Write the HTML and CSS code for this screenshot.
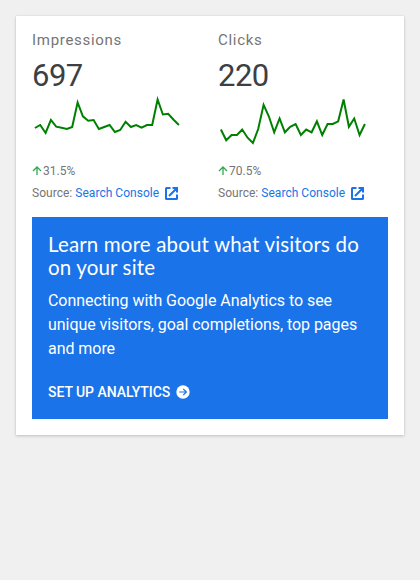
FILE: index.html
```html
<!DOCTYPE html>
<html lang="en">
<head>
<meta charset="utf-8">
<title>Search overview</title>
<link rel="stylesheet" href="styles.css">
</head>
<body>
<main class="card">
  <div class="metrics">
    <section class="metric">
      <h3 class="label">Impressions</h3>
      <div class="value">697</div>
      <svg class="chart" viewBox="32.4 96 154 56"><polyline points="35.3,128 40.6,125 46,133 51.3,120 56.6,126.7 62,127.8 67.3,129 72.6,127 78,102.5 83.3,116.3 88.6,120.7 94,120 99.3,129 104.6,127 110,125 115.3,132 120.6,130 126,121.8 131.3,127 136.6,125 142,127.7 147.3,125 152.6,125 158,99.5 163.3,114.5 168.6,113.8 174,119.7 179.3,125"/></svg>
      <div class="change"><svg class="up" viewBox="0 0 10 10"><path d="M5 9V1.5M1 5l4-4 4 4"/></svg>31.5%</div>
      <div class="source">Source: <a class="link">Search Console</a><svg class="external" viewBox="0 0 13 13"><path d="M5.500 1H1.500Q1 1 1 1.500v10Q1 12 1.500 12h10Q12 12 12 11.500V7.500M7.500 1H12v4.500M12 1L4 9"/></svg></div>
    </section>
    <section class="metric">
      <h3 class="label">Clicks</h3>
      <div class="value">220</div>
      <svg class="chart" viewBox="218.4 96 154 56"><polyline points="221.3,129.500 226.600,140.300 232,135 237.300,135 242.600,129.500 248,137.700 253.300,143 258.600,129 264,104.800 269.300,116.500 274.600,132.300 280,118.500 285.300,132.300 290.600,126.800 296,124 301.300,135 306.600,129.500 312,132.300 317.300,121.300 322.600,135 328,124 333.300,124 338.600,121.300 344,99.500 349.300,126.800 354.600,118.500 360,135 365.300,124"/></svg>
      <div class="change"><svg class="up" viewBox="0 0 10 10"><path d="M5 9V1.5M1 5l4-4 4 4"/></svg>70.5%</div>
      <div class="source">Source: <a class="link">Search Console</a><svg class="external" viewBox="0 0 13 13"><path d="M5.500 1H1.500Q1 1 1 1.500v10Q1 12 1.500 12h10Q12 12 12 11.500V7.500M7.500 1H12v4.500M12 1L4 9"/></svg></div>
    </section>
  </div>
  <section class="promo">
    <h2 class="promo-title">Learn more about what visitors do<br>on your site</h2>
    <p class="promo-text">Connecting with Google Analytics to see unique visitors, goal completions, top pages and more</p>
    <a class="cta">Set up Analytics<svg class="arrow" viewBox="0 0 14 14"><circle cx="7" cy="7" r="6.700"/><path d="M3.200 7h7M7.200 3.800L10.400 7l-3.200 3.200"/></svg></a>
  </section>
</main>
</body>
</html>
```
FILE: styles.css
```css
* { box-sizing: border-box; }
body {
  margin: 0;
  padding: 16px;
  background: #f0f0f0;
  color: #757575;
  font-family: Roboto, sans-serif;
}
.card {
  height: 419px;
  padding: 16px;
  background: #fff;
  box-shadow: 0 1px 3px rgba(0, 0, 0, .2), 0 0 1px rgba(0, 0, 0, .1);
}
.metrics {
  display: grid;
  grid-template-columns: 170px 170px;
  column-gap: 16px;
  height: 185px;
}
.label {
  margin: 0;
  font-size: 15px;
  font-weight: 400;
  line-height: 16px;
  letter-spacing: .7px;
}
.value {
  margin-top: 8px;
  height: 40px;
  color: #3c4043;
  font-size: 31px;
  line-height: 40px;
  letter-spacing: -.5px;
}
.chart {
  display: block;
  width: 154px;
  height: 56px;
  fill: none;
  stroke: #008000;
  stroke-width: 2;
}
.change {
  display: flex;
  align-items: center;
  margin-top: 11px;
  font-size: 12px;
  line-height: 16px;
  letter-spacing: .03px;
}
.up {
  width: 10px;
  height: 10px;
  margin-right: 1.5px;
  margin-left: -.5px;
  fill: none;
  stroke: #34a853;
  stroke-width: 1.3;
}
.source {
  display: flex;
  align-items: center;
  margin-top: 6px;
  font-size: 12px;
  line-height: 16px;
  letter-spacing: .03px;
  white-space: pre;
}
.link { color: #1a73e8; }
.external {
  width: 13px;
  height: 13px;
  margin-left: 5.500px;
  fill: none;
  stroke: #1a73e8;
  stroke-width: 2;
}
.promo {
  height: 202px;
  padding: 16px;
  background: #1a73e8;
  color: #fff;
}
.promo-title {
  margin: 0;
  font-family: Lato, sans-serif;
  font-size: 20.5px;
  font-weight: 400;
  line-height: 23px;
  letter-spacing: .15px;
}
.promo-text {
  margin: 10px 0 19px;
  font-size: 16px;
  line-height: 24px;
  letter-spacing: -.05px;
}
.cta {
  display: flex;
  align-items: center;
  font-size: 14px;
  font-weight: 500;
  line-height: 24px;
  letter-spacing: -.05px;
  text-transform: uppercase;
}
.arrow {
  width: 14px;
  height: 14px;
  margin-left: 5.500px;
  fill: #fff;
}
.arrow path {
  fill: none;
  stroke: #1a73e8;
  stroke-width: 1.2;
}
```
